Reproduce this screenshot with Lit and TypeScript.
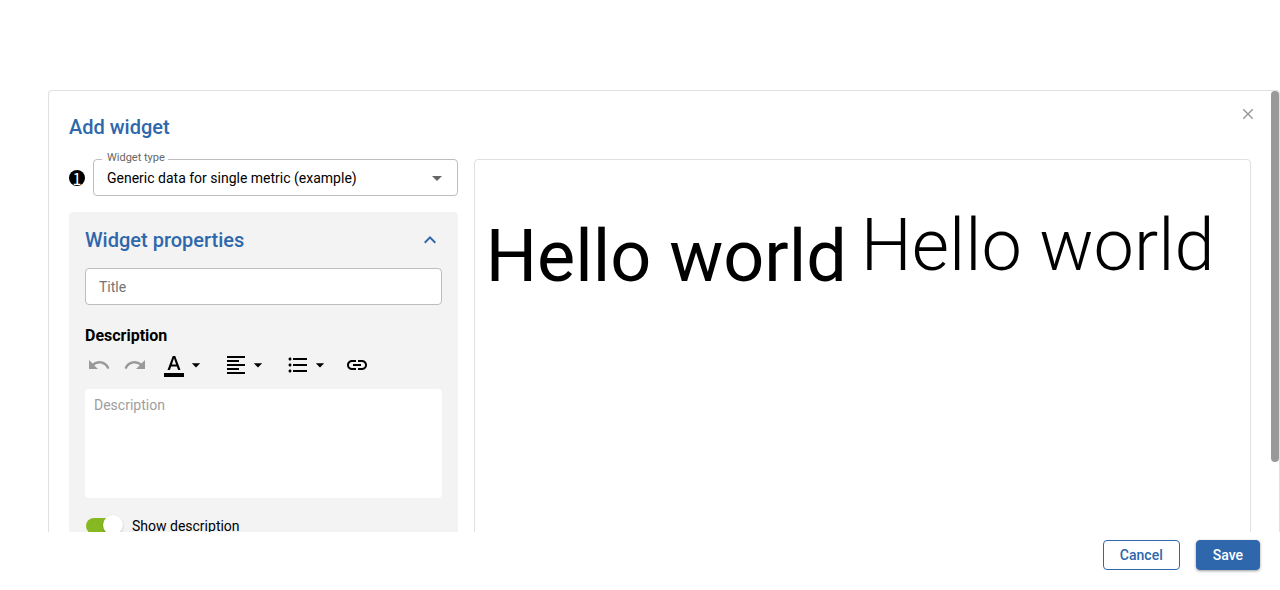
import { LitElement, html, css, svg } from "lit";
import { customElement, state } from "lit/decorators.js";

const ICONS = {
  undo: "M12.5 8c-2.65 0-5.05.99-6.9 2.6L2 7v9h9l-3.62-3.62c1.39-1.16 3.16-1.88 5.12-1.88 3.54 0 6.55 2.31 7.6 5.5l2.37-.78C21.08 11.03 17.15 8 12.5 8z",
  redo: "M18.4 10.6C16.55 8.99 14.15 8 11.5 8c-4.65 0-8.58 3.03-9.96 7.22L3.9 16c1.05-3.19 4.05-5.5 7.6-5.5 1.95 0 3.73.72 5.12 1.88L13 16h9V7l-3.6 3.6z",
  color: "M2 20h20v4H2zM5.49 17h2.42l1.27-3.58h5.65L16.09 17h2.42L13.25 3h-2.5L5.49 17zm4.42-5.61 2.03-5.79h.12l2.03 5.79H9.91z",
  align: "M15 15H3v2h12v-2zm0-8H3v2h12V7zM3 13h18v-2H3v2zm0 8h18v-2H3v2zM3 3v2h18V3H3z",
  list: "M4 10.5c-.83 0-1.5.67-1.5 1.5s.67 1.5 1.5 1.5 1.5-.67 1.5-1.5-.67-1.5-1.5-1.5zm0-6c-.83 0-1.5.67-1.5 1.5S3.17 7.5 4 7.5 5.5 6.83 5.5 6 4.83 4.5 4 4.5zm0 12c-.83 0-1.5.68-1.5 1.5s.68 1.5 1.5 1.5 1.5-.68 1.5-1.5-.67-1.5-1.5-1.5zM7 19h14v-2H7v2zm0-6h14v-2H7v2zm0-8v2h14V5H7z",
  link: "M3.9 12c0-1.71 1.39-3.1 3.1-3.1h4V7H7c-2.76 0-5 2.24-5 5s2.24 5 5 5h4v-1.9H7c-1.71 0-3.1-1.39-3.1-3.1zM8 13h8v-2H8v2zm9-6h-4v1.9h4c1.71 0 3.1 1.39 3.1 3.1s-1.39 3.1-3.1 3.1h-4V17h4c2.76 0 5-2.24 5-5s-2.24-5-5-5z",
  drop: "M7 10l5 5 5-5z",
  up: "M12 8l-6 6 1.41 1.41L12 10.83l4.59 4.58L18 14z",
  close: "M19 6.41L17.59 5 12 10.59 6.41 5 5 6.41 10.59 12 5 17.59 6.41 19 12 13.41 17.59 19 19 17.59 13.41 12z",
};

const icon = (name: keyof typeof ICONS, size = 24) => html`<svg
  width=${size}
  height=${size}
  viewBox="0 0 24 24"
  fill="currentColor"
  aria-hidden="true"
>${svg`<path d=${ICONS[name]}></path>`}</svg>`;

@customElement("app-root")
export class AppRoot extends LitElement {
  @state() private open = true;

  static styles = css`
    :host {
      display: flex;
      flex-direction: column;
      box-sizing: border-box;
      height: 100vh;
      padding: 90px 0 0 48px;
      background: #fff;
      color: #000;
      font: 14px/20px Roboto, sans-serif;
    }
    * { box-sizing: border-box; }
    svg { display: block; flex: none; }
    button, input, select, textarea { font: inherit; color: inherit; margin: 0; }
    button { border: 0; background: none; padding: 0; cursor: pointer; }
    h1, h2 { margin: 0; font-size: 20px; line-height: 24px; font-weight: 500; color: #2e67ac; }
    .frame { position: relative; flex: 1; min-height: 0; display: flex; }
    .panel {
      flex: 1;
      overflow: auto;
      scrollbar-width: none;
      border: 1px solid #e0e0e0;
      border-bottom: 0;
      border-radius: 4px 4px 0 0;
      padding: 24px 28px 20px 20px;
    }
    .thumb {
      position: absolute;
      top: 1px;
      right: 1px;
      width: 8px;
      height: 84%;
      border-radius: 4px;
      background: #999;
    }
    .close { position: absolute; top: 15px; right: 23px; color: #999; }
    .columns { display: grid; grid-template-columns: 1fr 2fr; gap: 16px; margin-top: 20px; }
    .type { display: flex; align-items: center; gap: 8px; margin-bottom: 16px; }
    .step {
      width: 16px;
      height: 16px;
      border-radius: 50%;
      background: #000;
      color: #fff;
      text-align: center;
      font: 16px/16px "Noto Sans CJK JP", sans-serif;
    }
    .field { position: relative; flex: 1; display: flex; }
    .field label {
      position: absolute;
      top: -8px;
      left: 9px;
      padding: 0 3px 0 5px;
      background: #fff;
      color: #666;
      font-size: 11px;
      line-height: 14px;
    }
    .field svg { position: absolute; right: 9px; top: 7px; color: #666; pointer-events: none; }
    .box {
      width: 100%;
      height: 37px;
      padding: 0 13px;
      border: 1px solid #bdbdbd;
      border-radius: 4px;
      background: #fff;
      appearance: none;
    }
    ::placeholder { color: #757575; opacity: 1; }
    .props { padding: 16px; border-radius: 4px; background: #f3f3f3; }
    .head { display: flex; justify-content: space-between; align-items: center; height: 24px; margin-bottom: 16px; }
    .chevron { color: #2e67ac; }
    .caption { display: block; margin: 21px 0 7px; font-size: 16px; line-height: 20px; font-weight: 700; }
    .tools { display: flex; align-items: center; height: 24px; padding-left: 2px; margin-bottom: 12px; }
    .tool { display: flex; align-items: center; }
    .muted { color: #999; margin-right: 12px; }
    .redo { margin-right: 15px; }
    .menu { margin-right: 18px; }
    .menu.last { margin-right: 15px; }
    .text {
      display: block;
      width: 100%;
      height: 109px;
      padding: 6px 9px;
      border: 0;
      border-radius: 4px;
      background: #fff;
      resize: none;
    }
    .text::placeholder { color: #9e9e9e; }
    .toggle { display: flex; align-items: center; gap: 10px; margin-top: 18px; padding-left: 1px; }
    .switch {
      appearance: none;
      position: relative;
      width: 36px;
      height: 16px;
      border-radius: 8px;
      background: #ccc;
    }
    .switch:checked { background: #86b822; }
    .switch::before {
      content: "";
      position: absolute;
      top: -3px;
      left: -1px;
      width: 20px;
      height: 20px;
      border-radius: 50%;
      background: #fff;
      box-shadow: 0 1px 2px rgba(0, 0, 0, 0.25);
    }
    .switch:checked::before { left: 17px; }
    .preview { display: flex; gap: 14px; padding: 33px 11px; border: 1px solid #e0e0e0; border-radius: 4px; font-size: 72px; white-space: nowrap; overflow: hidden; }
    .regular { line-height: 128px; }
    .light { line-height: 106px; font-weight: 300; }
    .actions { display: flex; justify-content: flex-end; gap: 16px; padding: 8px 20px 20px; }
    .btn { height: 30px; padding: 0 16px; border: 1px solid #2e67ac; border-radius: 4px; font-weight: 500; color: #2e67ac; }
    .primary { background: #2e67ac; color: #fff; box-shadow: 0 1px 3px rgba(0, 0, 0, 0.4); }
  `;

  render() {
    return html`
      <div class="frame">
        <main class="panel">
          <h1>Add widget</h1>
          <div class="columns">
            <section>
              <div class="type">
                <span class="step">1</span>
                <div class="field">
                  <select id="type" class="box">
                    <option>Generic data for single metric (example)</option>
                  </select>
                  <label for="type">Widget type</label>
                  ${icon("drop")}
                </div>
              </div>
              <div class="props">
                <div class="head">
                  <h2>Widget properties</h2>
                  <button class="chevron" aria-label="Toggle properties" aria-expanded=${this.open} @click=${() => (this.open = !this.open)}>
                    ${icon("up")}
                  </button>
                </div>
                ${this.open ? this.renderProperties() : null}
              </div>
            </section>
            <section class="preview">
              <span class="regular">Hello world</span>
              <span class="light">Hello world</span>
            </section>
          </div>
        </main>
        <button class="close" aria-label="Close">${icon("close", 18)}</button>
        <div class="thumb"></div>
      </div>
      <footer class="actions">
        <button class="btn">Cancel</button>
        <button class="btn primary">Save</button>
      </footer>
    `;
  }

  private renderProperties() {
    return html`
      <input class="box" type="text" placeholder="Title" aria-label="Title" />
      <label class="caption" for="description">Description</label>
      <div class="tools">
        <button class="tool muted" aria-label="Undo">${icon("undo")}</button>
        <button class="tool muted redo" aria-label="Redo">${icon("redo")}</button>
        <button class="tool menu" aria-label="Text color">${icon("color")}${icon("drop", 20)}</button>
        <button class="tool menu" aria-label="Alignment">${icon("align")}${icon("drop", 20)}</button>
        <button class="tool menu last" aria-label="List">${icon("list")}${icon("drop", 20)}</button>
        <button class="tool" aria-label="Link">${icon("link")}</button>
      </div>
      <textarea id="description" class="text" placeholder="Description"></textarea>
      <div class="toggle">
        <input id="show" class="switch" type="checkbox" checked />
        <label for="show">Show description</label>
      </div>
    `;
  }
}
